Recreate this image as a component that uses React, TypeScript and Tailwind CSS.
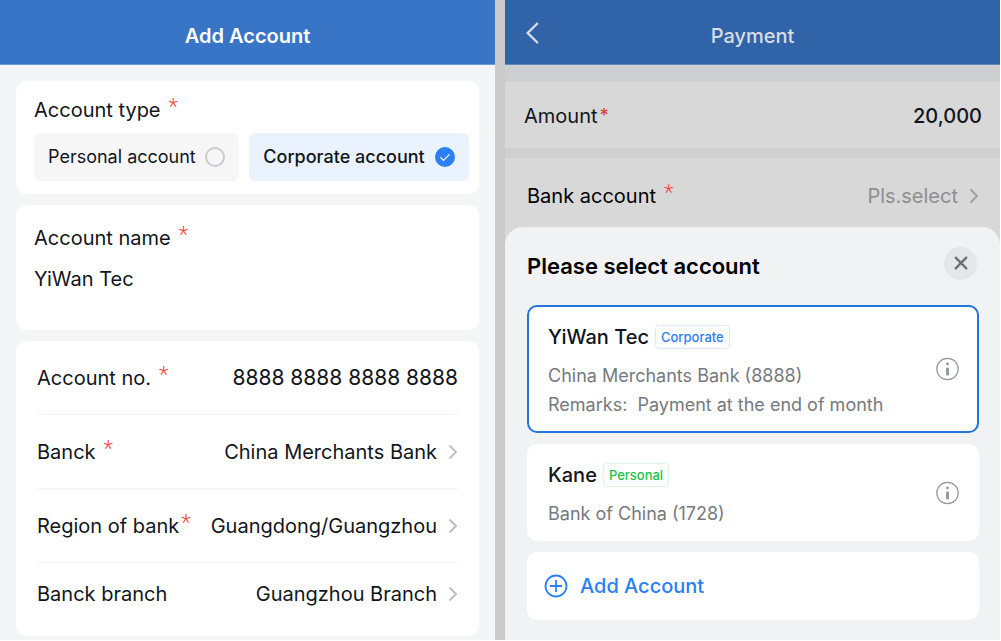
import { useState, type ReactNode } from "react";

function Required({ className = "ml-2" }: { className?: string }) {
  return (
    <span aria-hidden="true" className={`pb-1.5 font-['Roboto',sans-serif] text-[22px] leading-6 font-light text-[#f2493d] ${className}`}>
      *
    </span>
  );
}

function ChevronRight({ className = "text-[#bcbec3]" }: { className?: string }) {
  return (
    <svg viewBox="0 0 10 16" className={`h-4 w-[10px] shrink-0 ${className}`} fill="none" stroke="currentColor" strokeWidth="2" aria-hidden="true">
      <path d="M1.5 1.5 8 8l-6.500 6.500" />
    </svg>
  );
}

function InfoIcon() {
  return (
    <svg viewBox="0 0 24 24" className="size-6" fill="none" aria-hidden="true">
      <circle cx="12.500" cy="12" r="10.700" stroke="#929497" strokeWidth="1.200" />
      <circle cx="12.500" cy="6.900" r="1.400" fill="#929497" />
      <rect x="11.100" y="10.400" width="2.800" height="8" rx="1" fill="#929497" />
    </svg>
  );
}

function TypeOption({
  label,
  checked,
  onSelect,
}: {
  label: string;
  checked: boolean;
  onSelect: () => void;
}) {
  return (
    <label
      className={`flex h-12 cursor-pointer items-center justify-between rounded-md px-[14px] text-lg whitespace-nowrap ${
        checked ? "grow-[220] bg-[#eaf2fe] font-medium" : "grow-[205] bg-[#f6f6f7]"
      }`}
    >
      {label}
      <span className="grid size-5 place-items-center">
        <input
          type="radio"
          name="account-type"
          checked={checked}
          onChange={onSelect}
          className="col-start-1 row-start-1 size-5 appearance-none rounded-full border-2 border-[#cacbcf] checked:border-[#2a80f4] checked:bg-[#2a80f4]"
        />
        {checked && (
          <svg viewBox="0 0 20 20" className="pointer-events-none col-start-1 row-start-1 size-5" fill="none" stroke="white" strokeWidth="1.200" aria-hidden="true">
            <path d="m5.300 10.200 3.200 3.200 6-6" />
          </svg>
        )}
      </span>
    </label>
  );
}

function SelectRow({
  label,
  value,
  required,
  starClass,
  className,
}: {
  label: string;
  value: string;
  required?: boolean;
  starClass?: string;
  className: string;
}) {
  return (
    <button type="button" className={`flex w-full items-center justify-between whitespace-nowrap ${className}`}>
      <span className="flex items-center">
        {label}
        {required && <Required className={starClass} />}
      </span>
      <span className="flex items-center gap-[11px]">
        {value}
        <ChevronRight />
      </span>
    </button>
  );
}

function AddAccountScreen() {
  const [type, setType] = useState("corporate");
  return (
    <section className="flex min-w-0 flex-col bg-[#f4f5f7]">
      <header className="flex h-[65px] items-center justify-center border-b border-[#6b98d6] bg-[#3875c6] pt-2">
        <h1 className="text-xl font-semibold text-white">Add Account</h1>
      </header>
      <form className="flex flex-col gap-[11px] px-4 pt-4 pb-1">
        <fieldset className="min-w-0 rounded-[10px] bg-white pr-[10px] pb-[13px] pl-[18px]">
          <legend className="float-left flex h-[52px] w-full items-center pt-1.5">
            Account type
            <Required />
          </legend>
          <div className="clear-both flex gap-[10px]">
            <TypeOption label="Personal account" checked={type === "personal"} onSelect={() => setType("personal")} />
            <TypeOption label="Corporate account" checked={type === "corporate"} onSelect={() => setType("corporate")} />
          </div>
        </fieldset>

        <div className="flex h-[125px] flex-col gap-[17px] rounded-[10px] bg-white px-[18px] pt-[21px]">
          <label htmlFor="account-name" className="flex h-6 items-center">
            Account name
            <Required />
          </label>
          <input id="account-name" defaultValue="YiWan Tec" className="h-6 w-full min-w-0 outline-none" />
        </div>

        <div className="rounded-[10px] bg-white px-[21px]">
          <div className="flex h-[74px] items-center justify-between border-b border-[#f2f3f5]">
            <label htmlFor="account-no" className="flex items-center whitespace-nowrap">
              Account no.
              <Required />
            </label>
            <input id="account-no" inputMode="numeric" defaultValue="8888 8888 8888 8888" className="w-[250px] min-w-0 text-right text-[21px] outline-none" />
          </div>
          <SelectRow label="Banck" value="China Merchants Bank" required className="h-[74px] border-b border-[#f2f3f5]" />
          <SelectRow label="Region of bank" value="Guangdong/Guangzhou" required starClass="ml-0.5" className="h-[74px] border-b border-[#f2f3f5]" />
          <SelectRow label="Banck branch" value="Guangzhou Branch" className="h-[73px] pb-3" />
        </div>
      </form>
    </section>
  );
}

function AccountCard({
  name,
  tag,
  tagClass,
  className,
  children,
}: {
  name: string;
  tag: string;
  tagClass: string;
  className: string;
  children: ReactNode;
}) {
  return (
    <li className={`flex items-center justify-between rounded-[10px] border-2 bg-white pr-[18px] pl-[19px] ${className}`}>
      <div className="min-w-0 pt-[5px]">
        <div className="flex items-center gap-1.5">
          <h3 className="font-medium text-[#12151c]">{name}</h3>
          <span className={`rounded border px-[5px] text-[13px] leading-[22px] font-medium ${tagClass}`}>{tag}</span>
        </div>
        <div className="mt-3 text-lg leading-[29px] text-[#76797e]">{children}</div>
      </div>
      <button type="button" aria-label={`Details of ${name}`} className="shrink-0">
        <InfoIcon />
      </button>
    </li>
  );
}

function PaymentScreen() {
  return (
    <section className="flex min-w-0 flex-col bg-[#cecfd1]">
      <header className="grid h-[65px] grid-cols-[1fr_auto_1fr] items-center border-b border-[#6488b8] bg-[#3063a8] px-5 pt-0.5 text-[#d9dce1]">
        <button type="button" aria-label="Back" className="justify-self-start">
          <svg viewBox="0 0 14 22" className="h-[22px] w-[14px]" fill="none" stroke="currentColor" strokeWidth="2.400" aria-hidden="true">
            <path d="M12.800 1 2.700 11l10.100 10" />
          </svg>
        </button>
        <h1 className="pt-1.5 text-xl font-medium">Payment</h1>
      </header>

      <div className="mt-[17px] flex h-[66px] items-center justify-between bg-[#d8d8d8] pt-0.5 pr-[18px] pl-[19px]">
        <label htmlFor="amount" className="flex">
          Amount
          <span aria-hidden="true" className="ml-0.5 text-lg leading-6 font-medium text-[#d9443a]">*</span>
        </label>
        <input id="amount" inputMode="decimal" defaultValue="20,000" className="w-32 min-w-0 text-right font-medium outline-none" />
      </div>

      <div className="mt-[10px] flex grow flex-col bg-[#d8d8d8]">
        <button type="button" className="flex h-[69px] items-center justify-between pt-[7px] pr-[21px] pl-[22px] text-black">
          <span className="flex items-center">
            Bank account
            <Required />
          </span>
          <span className="flex items-center gap-[11px] text-[#8d8f92]">
            Pls.select
            <ChevronRight className="text-[#a0a1a3]" />
          </span>
        </button>

        <div role="dialog" aria-labelledby="sheet-title" className="grow rounded-t-[18px] bg-[#f1f2f4] pr-[21px] pb-5 pl-[22px]">
          <div className="flex h-[78px] items-center justify-between pr-0.5">
            <h2 id="sheet-title" className="text-[22px] font-semibold text-black">
              Please select account
            </h2>
            <button type="button" aria-label="Close" className="mb-1.5 grid size-[33px] place-items-center rounded-full bg-[#e5e6e8]">
              <svg viewBox="0 0 14 14" className="size-[14px]" fill="none" stroke="#6f7072" strokeWidth="2.400" strokeLinecap="round" aria-hidden="true">
                <path d="m1.700 1.700 10.600 10.600m0-10.600-10.600 10.600" />
              </svg>
            </button>
          </div>
          <ul className="flex flex-col gap-[11px]">
            <AccountCard name="YiWan Tec" tag="Corporate" tagClass="border-[#d9e8fd] text-[#2a80f4]" className="h-32 border-[#2374dc]">
              <p>China Merchants Bank (8888)</p>
              <p className="whitespace-pre">Remarks:  Payment at the end of month</p>
            </AccountCard>
            <AccountCard name="Kane" tag="Personal" tagClass="border-[#dcf6e2] text-[#21bf47]" className="h-[97px] border-white">
              <p>Bank of China (1728)</p>
            </AccountCard>
            <li>
              <button type="button" className="flex h-[68px] w-full items-center gap-3 rounded-[10px] bg-white px-[17px] text-[#2a80f4]">
                <svg viewBox="0 0 24 24" className="size-6" fill="none" stroke="currentColor" strokeWidth="1.800" aria-hidden="true">
                  <circle cx="12" cy="12" r="10.500" />
                  <path d="M12 6v12M6 12h12" />
                </svg>
                <span className="font-medium">Add Account</span>
              </button>
            </li>
          </ul>
        </div>
      </div>
    </section>
  );
}

export default function App() {
  return (
    <main className="grid grid-cols-[1fr_10px_1fr] bg-white pr-px pb-px font-['Inter',sans-serif] text-xl leading-6 text-[#12151c]">
      <AddAccountScreen />
      <div className="bg-[#cbcbcb]" />
      <PaymentScreen />
    </main>
  );
}
